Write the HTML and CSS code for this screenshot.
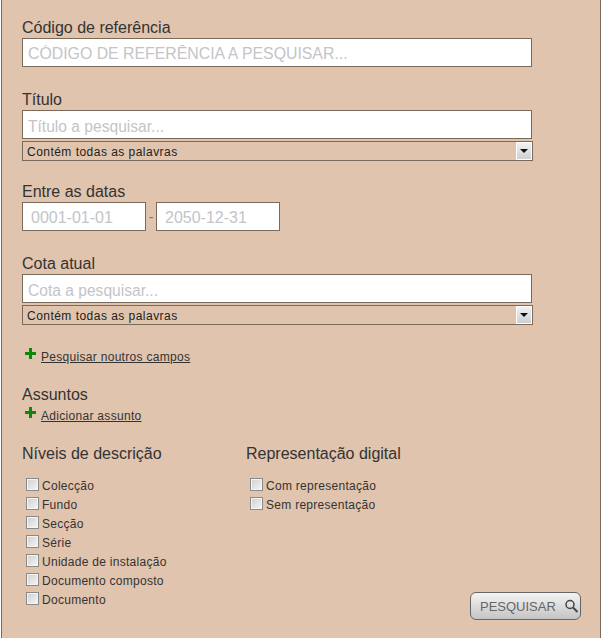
FILE: index.html
```html
<!DOCTYPE html>
<html lang="pt">

<head>
  <meta charset="UTF-8">
  <title>Pesquisa</title>
  <link rel="stylesheet" href="styles.css">
</head>

<body>
  <form class="search-panel">
    <div class="field">
      <label class="field-label">Código de referência</label>
      <input class="text-input input-code" type="text" placeholder="CÓDIGO DE REFERÊNCIA A PESQUISAR...">
    </div>

    <div class="field field-title">
      <label class="field-label">Título</label>
      <input class="text-input" type="text" placeholder="Título a pesquisar...">
      <div class="fake-select">
        <span>Contém todas as palavras</span>
        <span class="select-arrow"></span>
      </div>
    </div>

    <div class="field field-dates">
      <label class="field-label">Entre as datas</label>
      <div class="date-row">
        <input class="text-input date-input" type="text" placeholder="0001-01-01">
        <span class="date-sep">-</span>
        <input class="text-input date-input" type="text" placeholder="2050-12-31">
      </div>
    </div>

    <div class="field field-cota">
      <label class="field-label">Cota atual</label>
      <input class="text-input" type="text" placeholder="Cota a pesquisar...">
      <div class="fake-select">
        <span>Contém todas as palavras</span>
        <span class="select-arrow"></span>
      </div>
    </div>

    <div class="add-row add-fields">
      <svg class="plus" width="11" height="11" viewBox="0 0 11 11"><path d="M4 0h3v4h4v3h-4v4h-3v-4h-4v-3h4z" fill="#0a8a0a"/></svg>
      <a class="add-link" href="#">Pesquisar noutros campos</a>
    </div>

    <div class="subjects">
      <div class="field-label">Assuntos</div>
      <div class="add-row add-subject">
        <svg class="plus" width="11" height="11" viewBox="0 0 11 11"><path d="M4 0h3v4h4v3h-4v4h-3v-4h-4v-3h4z" fill="#0a8a0a"/></svg>
        <a class="add-link" href="#">Adicionar assunto</a>
      </div>
    </div>

    <div class="check-columns">
      <div class="check-col check-col-levels">
        <div class="field-label">Níveis de descrição</div>
        <ul class="check-list">
          <li><span class="check-box"></span>Colecção</li>
          <li><span class="check-box"></span>Fundo</li>
          <li><span class="check-box"></span>Secção</li>
          <li><span class="check-box"></span>Série</li>
          <li><span class="check-box"></span>Unidade de instalação</li>
          <li><span class="check-box"></span>Documento composto</li>
          <li><span class="check-box"></span>Documento</li>
        </ul>
      </div>
      <div class="check-col">
        <div class="field-label">Representação digital</div>
        <ul class="check-list">
          <li><span class="check-box"></span>Com representação</li>
          <li><span class="check-box"></span>Sem representação</li>
        </ul>
      </div>
    </div>

    <div class="actions">
      <button class="search-btn" type="button">
        PESQUISAR
        <svg width="16" height="16" viewBox="0 0 16 16"><circle cx="6" cy="6.500" r="4" fill="none" stroke="#444" stroke-width="1.500"/><path d="M9 9.500l4.500 4.500" stroke="#444" stroke-width="2" fill="none"/></svg>
      </button>
    </div>
  </form>
</body>

</html>
```

FILE: styles.css
```css
* {
  box-sizing: border-box;
}

html,
body {
  margin: 0;
  padding: 0;
}

body {
  width: 602px;
  height: 638px;
  overflow: hidden;
  background: #fff;
}

.search-panel {
  width: 600px;
  height: 638px;
  margin-left: 1px;
  padding: 18px 0 0 20px;
  background: #e0c4ad;
  border-left: 1px solid #7a6a5c;
  border-right: 1px solid #7a6a5c;
  font-family: "Liberation Sans", Arial, sans-serif;
  color: #333;
}

.field-label {
  display: block;
  font-size: 16px;
  line-height: 20px;
}

.text-input {
  display: block;
  width: 510px;
  height: 29px;
  padding: 4px 5px 0;
  border: 1px solid #7a6a5c;
  background: #fff;
  font-family: "Liberation Sans", Arial, sans-serif;
  font-size: 15.6px;
}

.input-code {
  padding-top: 2px;
  font-size: 15.85px;
}

.text-input::placeholder {
  color: #c4c4c8;
  opacity: 1;
}

.field-title {
  margin-top: 23px;
}

.field-dates {
  margin-top: 21px;
}

.field-cota {
  margin-top: 23px;
}

.fake-select {
  display: flex;
  align-items: center;
  justify-content: space-between;
  width: 511px;
  height: 20px;
  margin-top: 2px;
  padding-left: 4px;
  border: 1px solid #7a6a5c;
  font-size: 12px;
  letter-spacing: 0.47px;
  color: #222;
}

.fake-select span:first-child {
  padding-top: 1px;
}

.select-arrow {
  position: relative;
  width: 16px;
  height: 18px;
  border: 1px solid #fff;
  background: linear-gradient(#f2f2f2, #cfcfcf);
}

.select-arrow::after {
  content: "";
  position: absolute;
  left: 3px;
  top: 6px;
  border-left: 4px solid transparent;
  border-right: 4px solid transparent;
  border-top: 4px solid #111;
}

.date-row {
  display: flex;
  align-items: center;
}

.date-input {
  width: 124px;
  padding: 2px 8px 0;
  font-size: 16px;
}

.date-sep {
  width: 10px;
  text-align: center;
  font-size: 14px;
  color: #777;
}

.add-row {
  display: flex;
  align-items: flex-start;
  gap: 5px;
  padding-left: 3px;
}

.add-fields {
  margin-top: 23px;
}

.add-subject {
  margin-top: 2px;
}

.plus {
  flex: none;
}

.add-link {
  margin-top: 2px;
  font-size: 12px;
  line-height: 14px;
  letter-spacing: 0.3px;
  color: #333;
}

.subjects {
  margin-top: 21px;
}

.check-columns {
  display: flex;
  margin-top: 21px;
}

.check-col-levels {
  width: 224px;
}

.check-list {
  list-style: none;
  margin: 12px 0 0;
  padding: 0 0 0 4px;
}

.check-list li {
  display: flex;
  align-items: center;
  height: 19px;
  font-size: 12px;
  letter-spacing: 0.28px;
  color: #333;
}

.check-box {
  flex: none;
  width: 13px;
  height: 13px;
  margin: -3px 3px 0 0;
  border: 1px solid #8a8a8a;
  background: linear-gradient(135deg, #cfcfcf, #f6f6f6);
  box-shadow: inset 0 0 0 1px #f4f4f4;
}

.actions {
  position: absolute;
  left: 470px;
  top: 592px;
}

.search-btn {
  display: flex;
  align-items: center;
  justify-content: space-between;
  width: 111px;
  height: 28px;
  padding: 0 0 0 9px;
  border: 1px solid #666;
  border-radius: 6px;
  background: linear-gradient(#f4f4f4, #c4c4c4);
  font-family: "Liberation Sans", Arial, sans-serif;
  font-size: 13px;
  color: #666;
}
```
